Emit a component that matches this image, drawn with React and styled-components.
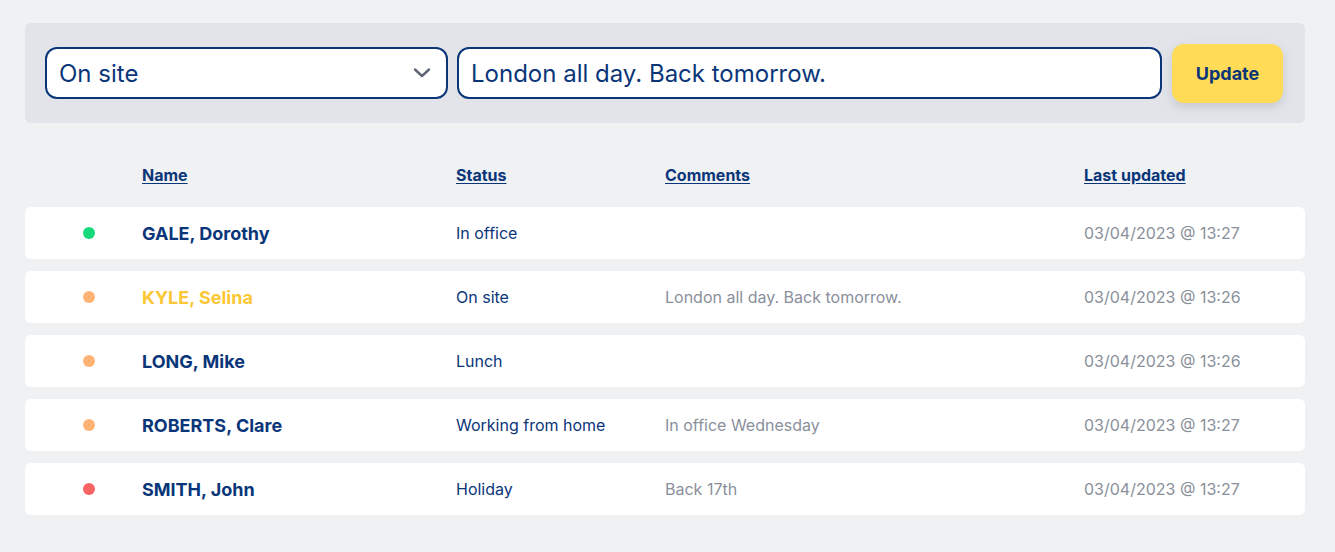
import React from 'react';
import styled, { createGlobalStyle } from 'styled-components';

const GlobalStyle = createGlobalStyle`
  body {
    margin: 0;
    background: #f0f1f3;
    font-family: Inter, "Noto Sans", sans-serif;
    color: #0a3679;
  }
`;

const Page = styled.div`
  padding: 23px 30px 30px 25px;
`;

const Toolbar = styled.div`
  display: flex;
  align-items: center;
  gap: 9px;
  height: 100px;
  box-sizing: border-box;
  padding: 0 22px 0 20px;
  background: #e2e4e9;
  border-radius: 6px;
`;

const SelectWrap = styled.div`
  position: relative;
  width: 403px;
  flex: none;
`;

const Select = styled.select`
  appearance: none;
  width: 100%;
  height: 52px;
  box-sizing: border-box;
  border: 2px solid #0a3679;
  border-radius: 12px;
  background: #fff;
  padding: 0 40px 0 12px;
  font-family: Inter, sans-serif;
  font-size: 24px;
  color: #0a3679;
  outline: none;
`;

const Chevron = styled.svg`
  position: absolute;
  right: 17px;
  top: 20px;
  pointer-events: none;
`;

const TextInput = styled.input`
  flex: 1;
  height: 52px;
  box-sizing: border-box;
  border: 2px solid #0a3679;
  border-radius: 12px;
  background: #fff;
  padding: 0 12px;
  font-family: Inter, sans-serif;
  font-size: 24px;
  color: #0a3679;
  outline: none;
  margin-right: 1px;
`;

const UpdateButton = styled.button`
  flex: none;
  width: 111px;
  height: 59px;
  border: none;
  border-radius: 12px;
  background: #ffdb57;
  color: #0a3679;
  font-family: Inter, sans-serif;
  font-weight: 700;
  font-size: 18px;
  box-shadow: 0 4px 10px rgba(120, 120, 140, 0.25);
  cursor: pointer;
`;

const columns = '117px 314px 209px 419px 1fr';

const HeaderRow = styled.div`
  display: grid;
  grid-template-columns: ${columns};
  align-items: center;
  height: 84px;
  padding-top: 20px;
  box-sizing: border-box;
`;

const HeaderCell = styled.a`
  grid-column: ${(p) => p.col};
  justify-self: start;
  font-size: 16px;
  font-weight: 700;
  color: #0a3679;
  text-decoration: underline;
  text-underline-offset: 2px;
  cursor: pointer;
`;

const Rows = styled.div`
  display: flex;
  flex-direction: column;
  gap: 12px;
`;

const Row = styled.div`
  display: grid;
  grid-template-columns: ${columns};
  align-items: center;
  height: 52px;
  background: #fff;
  border-radius: 6px;
`;

const Dot = styled.span`
  width: 12px;
  height: 12px;
  margin-left: 58px;
  border-radius: 50%;
  background: ${(p) => p.color};
`;

const Name = styled.div`
  font-size: 18px;
  font-weight: 700;
  color: ${(p) => (p.active ? '#fcc736' : '#0a3679')};
`;

const Status = styled.div`
  font-size: 16px;
  color: #0a3679;
`;

const Muted = styled.div`
  font-size: 16px;
  color: #8a909b;
`;

const dotColors = {
  green: '#17d97b',
  orange: '#feb273',
  red: '#f86464',
};

const people = [
  { name: 'GALE, Dorothy', status: 'In office', comment: '', updated: '03/04/2023 @ 13:27', dot: 'green' },
  { name: 'KYLE, Selina', status: 'On site', comment: 'London all day. Back tomorrow.', updated: '03/04/2023 @ 13:26', dot: 'orange', active: true },
  { name: 'LONG, Mike', status: 'Lunch', comment: '', updated: '03/04/2023 @ 13:26', dot: 'orange' },
  { name: 'ROBERTS, Clare', status: 'Working from home', comment: 'In office Wednesday', updated: '03/04/2023 @ 13:27', dot: 'orange' },
  { name: 'SMITH, John', status: 'Holiday', comment: 'Back 17th', updated: '03/04/2023 @ 13:27', dot: 'red' },
];

export default function App() {
  return (
    <>
      <GlobalStyle />
      <Page>
        <Toolbar>
          <SelectWrap>
            <Select defaultValue="On site">
              <option>In office</option>
              <option>On site</option>
              <option>Lunch</option>
              <option>Working from home</option>
              <option>Holiday</option>
            </Select>
            <Chevron width="18" height="12" viewBox="0 0 18 12" fill="none">
              <path d="M2 2.5 L9 9 L16 2.5" stroke="#5f6673" strokeWidth="2.4" strokeLinecap="round" strokeLinejoin="round" />
            </Chevron>
          </SelectWrap>
          <TextInput defaultValue="London all day. Back tomorrow." />
          <UpdateButton>Update</UpdateButton>
        </Toolbar>

        <HeaderRow>
          <HeaderCell col={2}>Name</HeaderCell>
          <HeaderCell col={3}>Status</HeaderCell>
          <HeaderCell col={4}>Comments</HeaderCell>
          <HeaderCell col={5}>Last updated</HeaderCell>
        </HeaderRow>

        <Rows>
          {people.map((p) => (
            <Row key={p.name}>
              <Dot color={dotColors[p.dot]} />
              <Name active={p.active}>{p.name}</Name>
              <Status>{p.status}</Status>
              <Muted>{p.comment}</Muted>
              <Muted>{p.updated}</Muted>
            </Row>
          ))}
        </Rows>
      </Page>
    </>
  );
}
